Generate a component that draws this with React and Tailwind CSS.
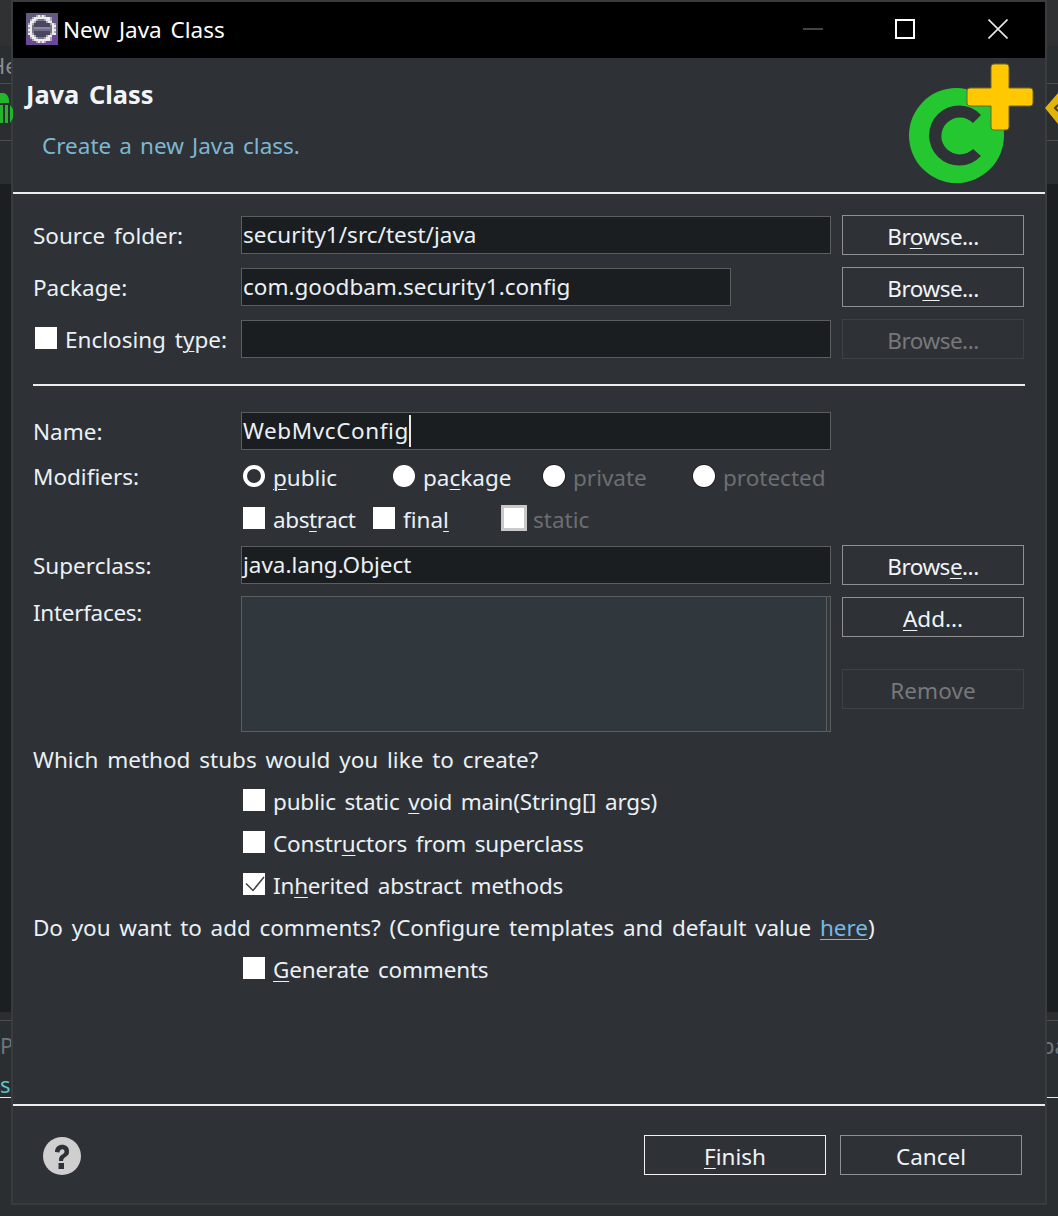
const font = { fontFamily: '"Noto Sans", "Noto Sans CJK KR", sans-serif' };

function U({ children }) {
  return <span className="underline underline-offset-[3px] decoration-1">{children}</span>;
}

function Btn({ children, disabled, primary, tracking = "" }) {
  const cls = disabled
    ? "border-[#3f4143] text-[#76787a]"
    : primary
    ? "border-[#f2f2f2] text-[#f0f4f8]"
    : "border-[#8f9091] text-[#f0f4f8]";
  return (
    <div className={`w-[182px] h-10 shrink-0 border flex items-center justify-center pt-[4px] text-[22.5px] ${tracking} ${cls}`}>
      <span>{children}</span>
    </div>
  );
}

function Field({ children, width = "w-[590px]", caret, tracking = "" }) {
  return (
    <div className={`${width} h-[38px] shrink-0 bg-[#1b1e21] border border-[#5b5d5f] flex items-center pl-[1px] text-[22.5px] text-[#eaf0f5] leading-none ${tracking}`}>
      <span>{children}</span>
      {caret && <span className="w-[2px] h-[32px] bg-[#e8e8e8]" />}
    </div>
  );
}

function Label({ children }) {
  return <div className="w-[208px] shrink-0 pt-[2px] text-[22.5px] text-[#eaf0f5]">{children}</div>;
}

function Row({ label, children, button, mb = "mb-3" }) {
  return (
    <div className={`flex items-center h-10 ${mb}`}>
      {label}
      <div className="w-[601px] shrink-0">{children}</div>
      {button}
    </div>
  );
}

function Box() {
  return <span className="w-[22px] h-[22px] shrink-0 bg-white block" />;
}

function Radio({ on, disabled }) {
  if (on) return <span className="w-[22px] h-[22px] shrink-0 rounded-full bg-[#2e3236] border-[4px] border-white block" />;
  if (disabled) return <span className="w-[22px] h-[22px] shrink-0 rounded-full bg-white block shadow-[0_0_0_1px_#1e2023]" />;
  return <span className="w-[22px] h-[22px] shrink-0 rounded-full bg-white block" />;
}

function Opt({ width, control, children, disabled, gap = "ml-2", tracking = "" }) {
  return (
    <div className={`${width} shrink-0 flex items-center`}>
      {control}
      <span className={`${gap} pt-[4px] ${tracking} ${disabled ? "text-[#6c6e70]" : "text-[#eaf0f5]"}`}>{children}</span>
    </div>
  );
}

function Check({ children, checked }) {
  return (
    <div className="flex items-center h-[42px] pl-[210px] text-[22.5px] text-[#eaf0f5]">
      {checked ? (
        <span className="w-[22px] h-[22px] shrink-0 bg-white block">
          <svg width="22" height="22" viewBox="0 0 22 22">
            <path d="M3 10.5 L10 17.5 L21 4" fill="none" stroke="#3d3f41" strokeWidth="1.5" />
          </svg>
        </span>
      ) : (
        <Box />
      )}
      <span className="ml-2 pt-[4px] tracking-[-0.2px]">{children}</span>
    </div>
  );
}

const ICON = [
  "aaaaaaaaaaaaaaaa",
  "aaaaaswswsaaaaaa",
  "aaaswwwwwwwwsaaa",
  "aaswwsgggswwsaaa",
  "aawwsdddddswwaaa",
  "aswsddddddddswsa",
  "awwgddddddddgwwa",
  "aswgllllllllgwsa",
  "awwgmmmmmmmmgwwa",
  "aswgddddddddgwsa",
  "awwsddddddddswwa",
  "bbwwsdddddswwbbb",
  "bbswwsgggswwsbbb",
  "bbbswwwwwwwwsbbb",
  "bbbbbswswsbbbbbb",
  "bbbbbbbbbbbbbbbb",
];
const ICON_COLORS = { a: "#65597f", b: "#6c479a", s: "#a9a7ad", w: "#ececec", g: "#77748a", d: "#4a4660", l: "#8a86a3", m: "#6f6b88" };

function EclipseIcon() {
  return (
    <svg width="32" height="32" viewBox="0 0 16 16" shapeRendering="crispEdges" className="shrink-0">
      {ICON.map((row, y) =>
        row.split("").map((c, x) => <rect key={`${x}-${y}`} x={x} y={y} width="1" height="1" fill={ICON_COLORS[c]} />)
      )}
    </svg>
  );
}

function Backdrop() {
  return (
    <>
      <div className="absolute left-0 top-0 w-[12px] h-[46px] bg-[#2f3133]" />
      <div className="absolute left-[1047px] top-0 w-[11px] h-[46px] bg-[#2f3133]" />
      <div className="absolute left-0 top-[83px] w-[12px] h-px bg-[#4b4d4f]" />
      <div className="absolute left-0 top-[140px] w-[12px] h-px bg-[#4b4d4f]" />
      <div className="absolute left-0 top-[184px] w-[12px] h-[828px] bg-[#1c1f22]" />
      <div className="absolute left-0 top-[1020px] w-[12px] h-px bg-[#4b4d4f]" />
      <div className="absolute left-0 top-[1097px] w-[12px] h-px bg-[#e8e8e8]" />
      <div className="absolute -left-[11px] top-[50px] text-[22px] leading-[30px] text-[#8b8d8f]">He</div>
      <div className="absolute left-0 top-[1030px] text-[22px] leading-[30px] text-[#6b7680]">P</div>
      <div className="absolute left-0 top-[1069px] text-[22px] leading-[30px] text-[#5fc3c3]">s</div>
      <div className="absolute left-[1047px] top-[83px] w-[11px] h-px bg-[#4b4d4f]" />
      <div className="absolute left-[1047px] top-[140px] w-[11px] h-px bg-[#4b4d4f]" />
      <div className="absolute left-[1047px] top-[184px] w-[11px] h-[828px] bg-[#1c1f22]" />
      <div className="absolute left-[1047px] top-[1020px] w-[11px] h-px bg-[#4b4d4f]" />
      <div className="absolute left-[1047px] top-[1097px] w-[11px] h-px bg-[#e8e8e8]" />
      <div className="absolute left-[1041px] top-[1030px] text-[22px] leading-[30px] text-[#6b7680]">pa</div>
    </>
  );
}

export default function App() {
  return (
    <div className="relative w-[1058px] h-[1216px] bg-[#2b2e31] overflow-hidden [word-spacing:3px]" style={font}>
      <Backdrop />
      {/* dialog window */}
      <div className="absolute left-[11px] top-0 w-[1036px] h-[1205px] bg-[#2e3236] border-2 border-[#393b3d] flex flex-col">
        {/* title bar */}
        <div className="h-[56px] shrink-0 bg-black flex items-start pt-[11px] pl-[13px] text-white text-[22.5px]">
          <EclipseIcon />
          <span className="ml-[5px] leading-[34px]">New Java Class</span>
          <div className="ml-auto flex items-center h-[32px] pr-[37px]">
            <svg width="20" height="2" viewBox="0 0 20 2" className="mr-[72px]"><rect width="20" height="2" fill="#444" /></svg>
            <svg width="20" height="20" viewBox="0 0 20 20" className="mr-[73px]"><rect x="1" y="1" width="18" height="18" fill="none" stroke="#fff" strokeWidth="2" /></svg>
            <svg width="20" height="20" viewBox="0 0 20 20"><path d="M0.5 0.5 L19.5 19.5 M19.5 0.5 L0.5 19.5" stroke="#e8e8e8" strokeWidth="1.6" /></svg>
          </div>
        </div>
        {/* banner */}
        <div className="relative h-[134px] shrink-0 border-b-2 border-[#ececec] box-content -mb-[1px]">
          <div className="pl-[13px] pt-[18px] text-[25.4px] font-bold text-[#f2f5f8] leading-[36px]">Java Class</div>
          <div className="pl-[29px] pt-[18px] text-[22.5px] text-[#7db6d2] leading-[32px] [word-spacing:2.3px]">Create a new Java class.</div>
          <svg className="absolute left-[892px] top-[2px]" width="130" height="126" viewBox="0 0 130 126">
            <circle cx="51.5" cy="75.5" r="47.5" fill="#24c72f" />
            <path d="M76 55 A30 30 0 1 0 76 96 L68 89 A18.5 18.5 0 1 1 68 63 Z" fill="#2e3236" />
            <path d="M89 4 H101 A3 3 0 0 1 104 7 V28 H125 A3 3 0 0 1 128 31 V43 A3 3 0 0 1 125 46 H104 V67 A3 3 0 0 1 101 70 H89 A3 3 0 0 1 86 67 V46 H65 A3 3 0 0 1 62 43 V31 A3 3 0 0 1 65 28 H86 V7 A3 3 0 0 1 89 4 Z" fill="#ffc800" stroke="#6f6426" strokeWidth="1" />
          </svg>
        </div>
        {/* form */}
        <div className="pl-[20px] pt-[22px] grow flex flex-col">
          <Row label={<Label>Source folder:</Label>} button={<Btn tracking="tracking-[-0.5px]">Br<U>o</U>wse...</Btn>}>
            <Field>security1/src/test/java</Field>
          </Row>
          <Row label={<Label>Package:</Label>} button={<Btn tracking="tracking-[-0.5px]">Bro<U>w</U>se...</Btn>}>
            <Field width="w-[490px]">com.goodbam.security1.config</Field>
          </Row>
          <Row
            label={
              <div className="w-[208px] shrink-0 flex items-center text-[22.5px] text-[#eaf0f5]">
                <span className="ml-[2px] -mt-[2px]"><Box /></span>
                <span className="ml-[8px] pt-[2px]">Enclosing t<U>y</U>pe:</span>
              </div>
            }
            button={<Btn disabled tracking="tracking-[-0.5px]">Browse...</Btn>}
            mb="mb-0"
          >
            <Field />
          </Row>
          <div className="w-[992px] h-[2px] bg-[#ececec] mt-[25px] mb-[25px]" />
          <Row label={<Label>Name:</Label>} mb="mb-0">
            <Field caret tracking="tracking-[0.6px]">WebMvcConfig</Field>
          </Row>
          <div className="mt-[4px] flex items-center h-[42px] text-[22.5px] text-[#eaf0f5]">
            <div className="w-[208px] shrink-0 pt-[2px]">Modifiers:</div>
            <div className="pl-[2px] flex items-center">
              <Opt width="w-[150px]" control={<Radio on />}><U>p</U>ublic</Opt>
              <Opt width="w-[150px]" control={<Radio />}>pa<U>c</U>kage</Opt>
              <Opt width="w-[150px]" control={<Radio disabled />} disabled>private</Opt>
              <Opt width="w-[150px]" control={<Radio disabled />} disabled>protected</Opt>
            </div>
          </div>
          <div className="flex items-center h-[42px] pl-[210px] text-[22.5px]">
            <Opt width="w-[130px]" tracking="tracking-[-0.4px]" control={<Box />}>abs<U>t</U>ract</Opt>
            <Opt width="w-[128px]" control={<Box />}>fina<U>l</U></Opt>
            <Opt
              width="w-[120px]"
              gap="ml-[6px]"
              disabled
              control={<span className="w-[26px] h-[26px] shrink-0 bg-white border-[3px] border-[#c9c9c9] block" />}
            >
              static
            </Opt>
          </div>
          <div className="mt-[6px]">
            <Row label={<Label>Superclass:</Label>} button={<Btn tracking="tracking-[-0.5px]">Brows<U>e</U>...</Btn>}>
              <Field>java.lang.Object</Field>
            </Row>
          </div>
          <div className="flex items-start h-[135px]">
            <div className="w-[208px] shrink-0 -mt-[1px] text-[22.5px] tracking-[-0.3px] text-[#eaf0f5]">Interfaces:</div>
            <div className="w-[601px] shrink-0 -mt-[1px]">
              <div className="w-[590px] h-[136px] bg-[#30373d] border border-[#5b5d5f] flex justify-end">
                <div className="w-[4px] h-full border-l border-[#5b5d5f]" />
              </div>
            </div>
            <div className="flex flex-col gap-8">
              <Btn><U>A</U>dd...</Btn>
              <Btn disabled tracking="tracking-[0.1px]">Remove</Btn>
            </div>
          </div>
          <div className="mt-[5px] h-[42px] flex items-center text-[22.5px] text-[#eaf0f5]">
            <span className="pt-[4px]">Which method stubs would you like to create?</span>
          </div>
          <Check>public static <U>v</U>oid main(String[] args)</Check>
          <Check>Constr<U>u</U>ctors from superclass</Check>
          <Check checked>In<U>h</U>erited abstract methods</Check>
          <div className="h-[42px] flex items-center text-[22.5px] tracking-[-0.06px] text-[#eaf0f5]">
            <span className="pt-[4px]">
              Do you want to add comments? (Configure templates and default value{" "}
              <span className="text-[#74b9e6] underline underline-offset-[3px] decoration-1">here</span>)
            </span>
          </div>
          <Check><U>G</U>enerate comments</Check>
        </div>
        {/* footer */}
        <div className="h-[99px] shrink-0 border-t-2 border-[#ececec] pt-[29px] pl-[30px] flex items-start">
          <svg width="38" height="38" viewBox="0 0 38 38" className="mt-[2px] shrink-0">
            <circle cx="19" cy="19" r="19" fill="#cfcfcf" />
            <path d="M12 15 C12 5 27 6 26 15 C26 20 20 19.5 20 24 H16 C15.5 17 21.5 18 21.5 14.5 C21.5 11 16.5 11.5 16.5 15.5 Z" fill="#2e3236" />
            <rect x="15.5" y="26" width="5.5" height="6" fill="#2e3236" />
          </svg>
          <div className="ml-[563px] flex gap-[14px]">
            <Btn primary><U>F</U>inish</Btn>
            <Btn>Cancel</Btn>
          </div>
        </div>
      </div>
      {/* neighbours that show over the edge of the dialog */}
      <svg className="absolute left-0 top-[92px]" width="14" height="34" viewBox="0 0 14 34">
        <path d="M0 1 H3 A6 8 0 0 1 9 9 V11 H0 Z M0 13 H3 V31 H0 Z M5 13 H8 V31 H5 Z M10 13 V31 L13 26 V17 Z" fill="#23b52c" />
      </svg>
      <svg className="absolute left-[1045px] top-[92px]" width="13" height="34" viewBox="0 0 13 34">
        <path d="M0 16 L13 1 V32 Z" fill="#e2b40a" />
        <path d="M13 13 L10 16 L13 19" fill="none" stroke="#4a4012" strokeWidth="2" />
      </svg>
    </div>
  );
}
